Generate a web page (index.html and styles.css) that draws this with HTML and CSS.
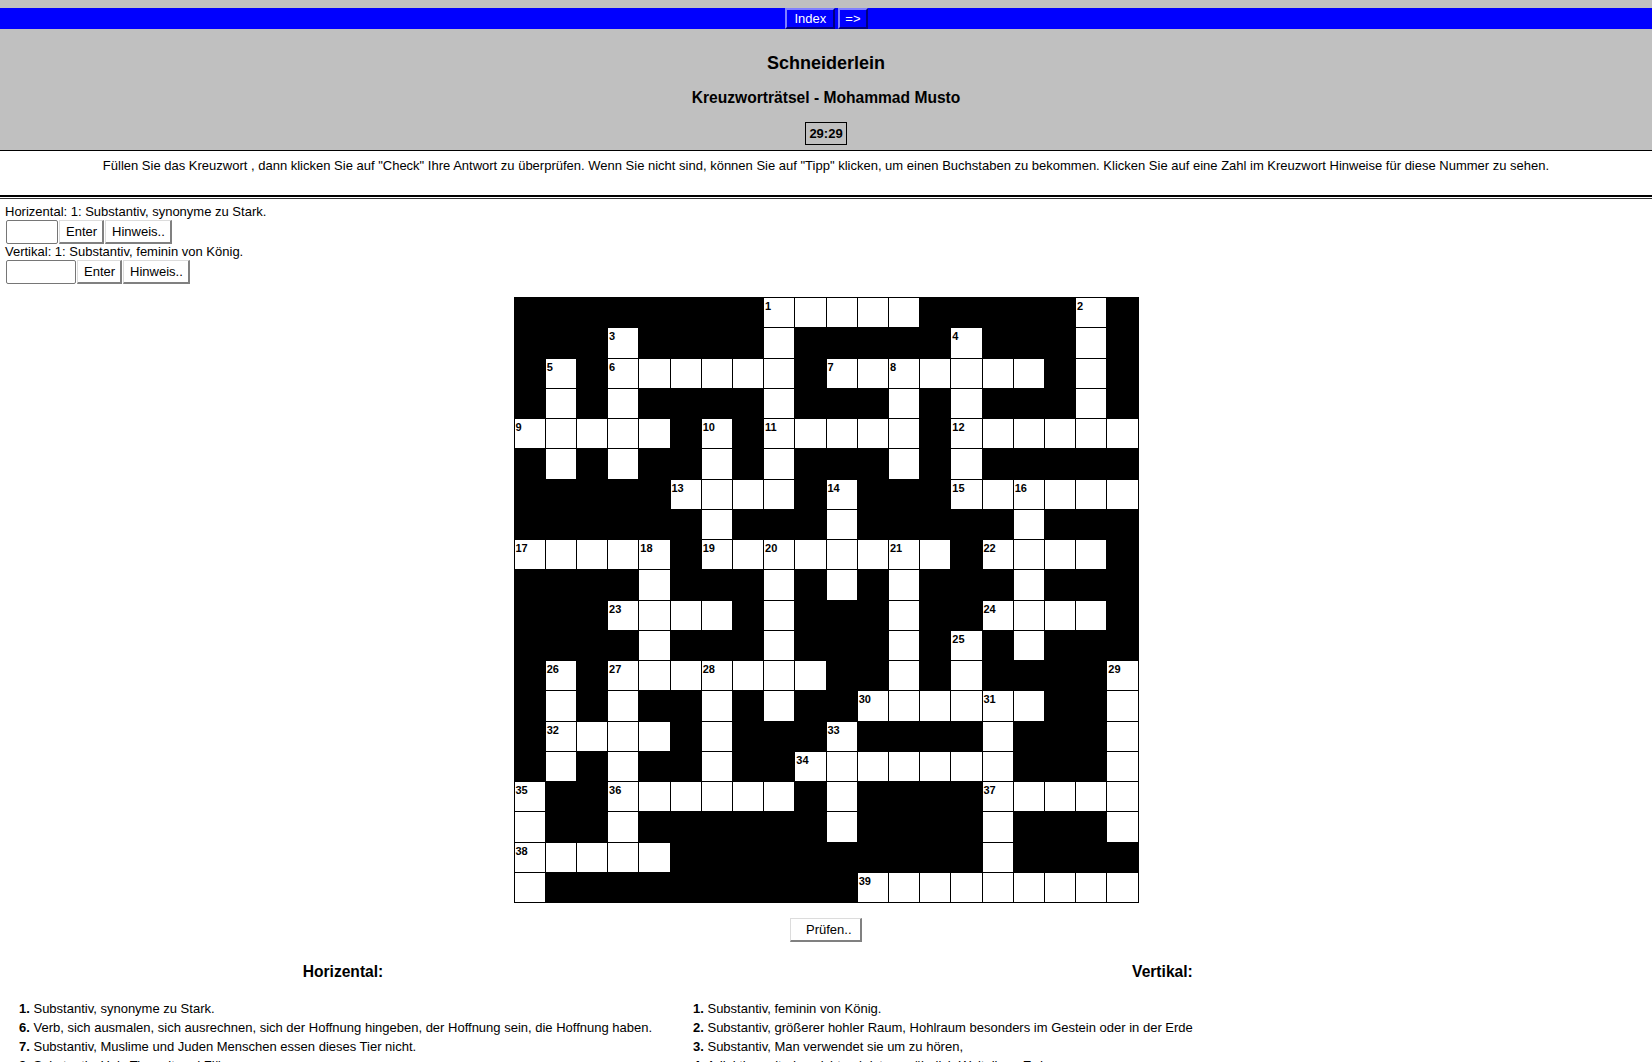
FILE: index.html
```html
<!DOCTYPE html>
<html lang="de">
<head>
<meta charset="utf-8">
<title>Schneiderlein</title>
<link rel="stylesheet" href="styles.css">
</head>
<body>
<div class="header">
  <div class="navbar">
    <a class="navbtn wide" href="#">Index</a>
    <a class="navbtn" href="#">=&gt;</a>
  </div>
  <h3 class="title">Schneiderlein</h3>
  <h4 class="subtitle">Kreuzworträtsel - Mohammad Musto</h4>
  <div class="timer-wrap"><span class="timer">29:29</span></div>
</div>
<p class="intro">Füllen Sie das Kreuzwort , dann klicken Sie auf "Check" Ihre Antwort zu überprüfen. Wenn Sie nicht sind, können Sie auf "Tipp" klicken, um einen Buchstaben zu bekommen. Klicken Sie auf eine Zahl im Kreuzwort Hinweise für diese Nummer zu sehen.</p>
<div class="rule"></div>
<div class="answer">
  <div class="clue">Horizental: 1: Substantiv, synonyme zu Stark.</div>
  <div class="entry"><input class="field short" type="text"><button class="btn">Enter</button><button class="btn">Hinweis..</button></div>
  <div class="clue">Vertikal: 1: Substantiv, feminin von König.</div>
  <div class="entry"><input class="field long" type="text"><button class="btn">Enter</button><button class="btn">Hinweis..</button></div>
</div>
<div class="board">
<span></span><span></span><span></span><span></span><span></span><span></span><span></span><span></span><span class="w"><b class="n">1</b></span><span class="w"></span><span class="w"></span><span class="w"></span><span class="w"></span><span></span><span></span><span></span><span></span><span></span><span class="w"><b class="n">2</b></span><span></span>
<span></span><span></span><span></span><span class="w"><b class="n">3</b></span><span></span><span></span><span></span><span></span><span class="w"></span><span></span><span></span><span></span><span></span><span></span><span class="w"><b class="n">4</b></span><span></span><span></span><span></span><span class="w"></span><span></span>
<span></span><span class="w"><b class="n">5</b></span><span></span><span class="w"><b class="n">6</b></span><span class="w"></span><span class="w"></span><span class="w"></span><span class="w"></span><span class="w"></span><span></span><span class="w"><b class="n">7</b></span><span class="w"></span><span class="w"><b class="n">8</b></span><span class="w"></span><span class="w"></span><span class="w"></span><span class="w"></span><span></span><span class="w"></span><span></span>
<span></span><span class="w"></span><span></span><span class="w"></span><span></span><span></span><span></span><span></span><span class="w"></span><span></span><span></span><span></span><span class="w"></span><span></span><span class="w"></span><span></span><span></span><span></span><span class="w"></span><span></span>
<span class="w"><b class="n">9</b></span><span class="w"></span><span class="w"></span><span class="w"></span><span class="w"></span><span></span><span class="w"><b class="n">10</b></span><span></span><span class="w"><b class="n">11</b></span><span class="w"></span><span class="w"></span><span class="w"></span><span class="w"></span><span></span><span class="w"><b class="n">12</b></span><span class="w"></span><span class="w"></span><span class="w"></span><span class="w"></span><span class="w"></span>
<span></span><span class="w"></span><span></span><span class="w"></span><span></span><span></span><span class="w"></span><span></span><span class="w"></span><span></span><span></span><span></span><span class="w"></span><span></span><span class="w"></span><span></span><span></span><span></span><span></span><span></span>
<span></span><span></span><span></span><span></span><span></span><span class="w"><b class="n">13</b></span><span class="w"></span><span class="w"></span><span class="w"></span><span></span><span class="w"><b class="n">14</b></span><span></span><span></span><span></span><span class="w"><b class="n">15</b></span><span class="w"></span><span class="w"><b class="n">16</b></span><span class="w"></span><span class="w"></span><span class="w"></span>
<span></span><span></span><span></span><span></span><span></span><span></span><span class="w"></span><span></span><span></span><span></span><span class="w"></span><span></span><span></span><span></span><span></span><span></span><span class="w"></span><span></span><span></span><span></span>
<span class="w"><b class="n">17</b></span><span class="w"></span><span class="w"></span><span class="w"></span><span class="w"><b class="n">18</b></span><span></span><span class="w"><b class="n">19</b></span><span class="w"></span><span class="w"><b class="n">20</b></span><span class="w"></span><span class="w"></span><span class="w"></span><span class="w"><b class="n">21</b></span><span class="w"></span><span></span><span class="w"><b class="n">22</b></span><span class="w"></span><span class="w"></span><span class="w"></span><span></span>
<span></span><span></span><span></span><span></span><span class="w"></span><span></span><span></span><span></span><span class="w"></span><span></span><span class="w"></span><span></span><span class="w"></span><span></span><span></span><span></span><span class="w"></span><span></span><span></span><span></span>
<span></span><span></span><span></span><span class="w"><b class="n">23</b></span><span class="w"></span><span class="w"></span><span class="w"></span><span></span><span class="w"></span><span></span><span></span><span></span><span class="w"></span><span></span><span></span><span class="w"><b class="n">24</b></span><span class="w"></span><span class="w"></span><span class="w"></span><span></span>
<span></span><span></span><span></span><span></span><span class="w"></span><span></span><span></span><span></span><span class="w"></span><span></span><span></span><span></span><span class="w"></span><span></span><span class="w"><b class="n">25</b></span><span></span><span class="w"></span><span></span><span></span><span></span>
<span></span><span class="w"><b class="n">26</b></span><span></span><span class="w"><b class="n">27</b></span><span class="w"></span><span class="w"></span><span class="w"><b class="n">28</b></span><span class="w"></span><span class="w"></span><span class="w"></span><span></span><span></span><span class="w"></span><span></span><span class="w"></span><span></span><span></span><span></span><span></span><span class="w"><b class="n">29</b></span>
<span></span><span class="w"></span><span></span><span class="w"></span><span></span><span></span><span class="w"></span><span></span><span class="w"></span><span></span><span></span><span class="w"><b class="n">30</b></span><span class="w"></span><span class="w"></span><span class="w"></span><span class="w"><b class="n">31</b></span><span class="w"></span><span></span><span></span><span class="w"></span>
<span></span><span class="w"><b class="n">32</b></span><span class="w"></span><span class="w"></span><span class="w"></span><span></span><span class="w"></span><span></span><span></span><span></span><span class="w"><b class="n">33</b></span><span></span><span></span><span></span><span></span><span class="w"></span><span></span><span></span><span></span><span class="w"></span>
<span></span><span class="w"></span><span></span><span class="w"></span><span></span><span></span><span class="w"></span><span></span><span></span><span class="w"><b class="n">34</b></span><span class="w"></span><span class="w"></span><span class="w"></span><span class="w"></span><span class="w"></span><span class="w"></span><span></span><span></span><span></span><span class="w"></span>
<span class="w"><b class="n">35</b></span><span></span><span></span><span class="w"><b class="n">36</b></span><span class="w"></span><span class="w"></span><span class="w"></span><span class="w"></span><span class="w"></span><span></span><span class="w"></span><span></span><span></span><span></span><span></span><span class="w"><b class="n">37</b></span><span class="w"></span><span class="w"></span><span class="w"></span><span class="w"></span>
<span class="w"></span><span></span><span></span><span class="w"></span><span></span><span></span><span></span><span></span><span></span><span></span><span class="w"></span><span></span><span></span><span></span><span></span><span class="w"></span><span></span><span></span><span></span><span class="w"></span>
<span class="w"><b class="n">38</b></span><span class="w"></span><span class="w"></span><span class="w"></span><span class="w"></span><span></span><span></span><span></span><span></span><span></span><span></span><span></span><span></span><span></span><span></span><span class="w"></span><span></span><span></span><span></span><span></span>
<span class="w"></span><span></span><span></span><span></span><span></span><span></span><span></span><span></span><span></span><span></span><span></span><span class="w"><b class="n">39</b></span><span class="w"></span><span class="w"></span><span class="w"></span><span class="w"></span><span class="w"></span><span class="w"></span><span class="w"></span><span class="w"></span>
</div>
<div class="check"><button class="btn check-btn">Prüfen..</button></div>
<div class="clues">
  <div class="col col-across">
    <h4 class="clues-head">Horizental:</h4>
    <div class="item"><b>1.</b> Substantiv, synonyme zu Stark.</div>
    <div class="item"><b>6.</b> Verb, sich ausmalen, sich ausrechnen, sich der Hoffnung hingeben, der Hoffnung sein, die Hoffnung haben.</div>
    <div class="item"><b>7.</b> Substantiv, Muslime und Juden Menschen essen dieses Tier nicht.</div>
    <div class="item"><b>9.</b> Substantiv, Holz Tierwelt und Flüsse.</div>
    <div class="item"><b>11.</b> Substantiv, ein Teil des Körpers.</div>
  </div>
  <div class="col col-down">
    <h4 class="clues-head">Vertikal:</h4>
    <div class="item"><b>1.</b> Substantiv, feminin von König.</div>
    <div class="item"><b>2.</b> Substantiv, größerer hohler Raum, Hohlraum besonders im Gestein oder in der Erde</div>
    <div class="item"><b>3.</b> Substantiv, Man verwendet sie um zu hören,</div>
    <div class="item"><b>4.</b> Adjektiv, weit, das nicht nah ist, gewöhnlich Weltall um Erde</div>
    <div class="item"><b>5.</b> Substantiv, ein großes Tier.</div>
  </div>
</div>
</body>
</html>
```
FILE: styles.css
```css
html, body {
  margin: 0;
  padding: 0;
}

body {
  font-family: "Liberation Sans", Arial, sans-serif;
  font-size: 13px;
  color: #000;
  background: #fff;
}

/* ---------- header ---------- */
.header {
  background: #c0c0c0;
  padding: 8px 0 5px;
  border-bottom: 1px solid #000;
  text-align: center;
}

.navbar {
  background: #0000ff;
  height: 21px;
  display: flex;
  justify-content: center;
  gap: 3px;
}

.navbtn {
  display: block;
  box-sizing: border-box;
  height: 21px;
  padding: 0 5px;
  border: 2px solid;
  border-color: #8080ff #000080 #000080 #8080ff;
  color: #fff;
  text-decoration: none;
  font-size: 13px;
  line-height: 17px;
}

.navbtn.wide {
  padding: 0 7px 0 8px;
}

.title {
  margin: 24px 0 0;
  font-size: 18px;
  line-height: 20px;
  font-weight: bold;
}

.subtitle {
  margin: 16px 0 0;
  font-size: 15.6px;
  line-height: 18px;
  font-weight: bold;
}

.timer-wrap {
  margin-top: 15px;
  display: flex;
  justify-content: center;
}

.timer {
  display: block;
  border: 1px solid #000;
  padding: 3px;
  font-weight: bold;
  line-height: 15px;
}

/* ---------- intro ---------- */
.intro {
  margin: 0;
  padding-top: 7px;
  line-height: 15px;
  text-align: center;
}

.rule {
  margin-top: 22px;
  height: 1px;
  border-top: 2px solid #000;
  border-bottom: 1px solid #333;
  background: #fff;
}

/* ---------- answer entry ---------- */
.answer {
  padding: 5px 0 0 5px;
}

.clue {
  line-height: 16px;
}

.entry {
  display: flex;
  align-items: flex-start;
  gap: 1px;
  height: 24px;
  padding-left: 1px;
}

.field {
  box-sizing: border-box;
  height: 24px;
  margin: 0;
  padding: 0 2px;
  border: 1px solid #767676;
  border-radius: 2px;
  background: #fff;
  font: 13px "Liberation Sans", Arial, sans-serif;
}

.field.short { width: 52px; }
.field.long { width: 70px; }

.btn {
  box-sizing: border-box;
  height: 24px;
  margin: 0;
  padding: 0 5px 0 6px;
  background: #fff;
  border-style: solid;
  border-width: 1px 2px 2px 1px;
  border-color: #dcdcdc #808080 #808080 #dcdcdc;
  color: #000;
  font: 13px/21px "Liberation Sans", Arial, sans-serif;
}

/* ---------- board ---------- */
.board {
  box-sizing: border-box;
  width: 625px;
  height: 606px;
  margin: 13px auto 0;
  padding: 1px;
  background: #000;
  display: grid;
  grid-template-columns: repeat(20, 1fr);
  grid-template-rows: repeat(20, 1fr);
  gap: 1px;
}

.board > span {
  min-width: 0;
  min-height: 0;
}

.board > .w {
  background: #fff;
}

.n {
  display: block;
  padding: 2px 0 0 1px;
  font-size: 11px;
  line-height: 12px;
  font-weight: bold;
}

.check {
  margin-top: 15px;
  display: flex;
  justify-content: center;
}

.check-btn {
  width: 72px;
  padding: 0 10px 0 15px;
}

/* ---------- clue lists ---------- */
.clues {
  margin-top: 21px;
  display: flex;
  align-items: flex-start;
}

.col-across {
  width: 686px;
  flex: none;
}

.col-across .clues-head {
  text-align: center;
}

.col-across .item {
  padding-left: 19px;
}

.col-down {
  flex: none;
  margin-left: 7px;
}

.col-down .clues-head {
  text-align: right;
}

.clues-head {
  margin: 0 0 18px;
  font-size: 15.6px;
  line-height: 18px;
  font-weight: bold;
}

.item {
  line-height: 19px;
  white-space: nowrap;
}
```
